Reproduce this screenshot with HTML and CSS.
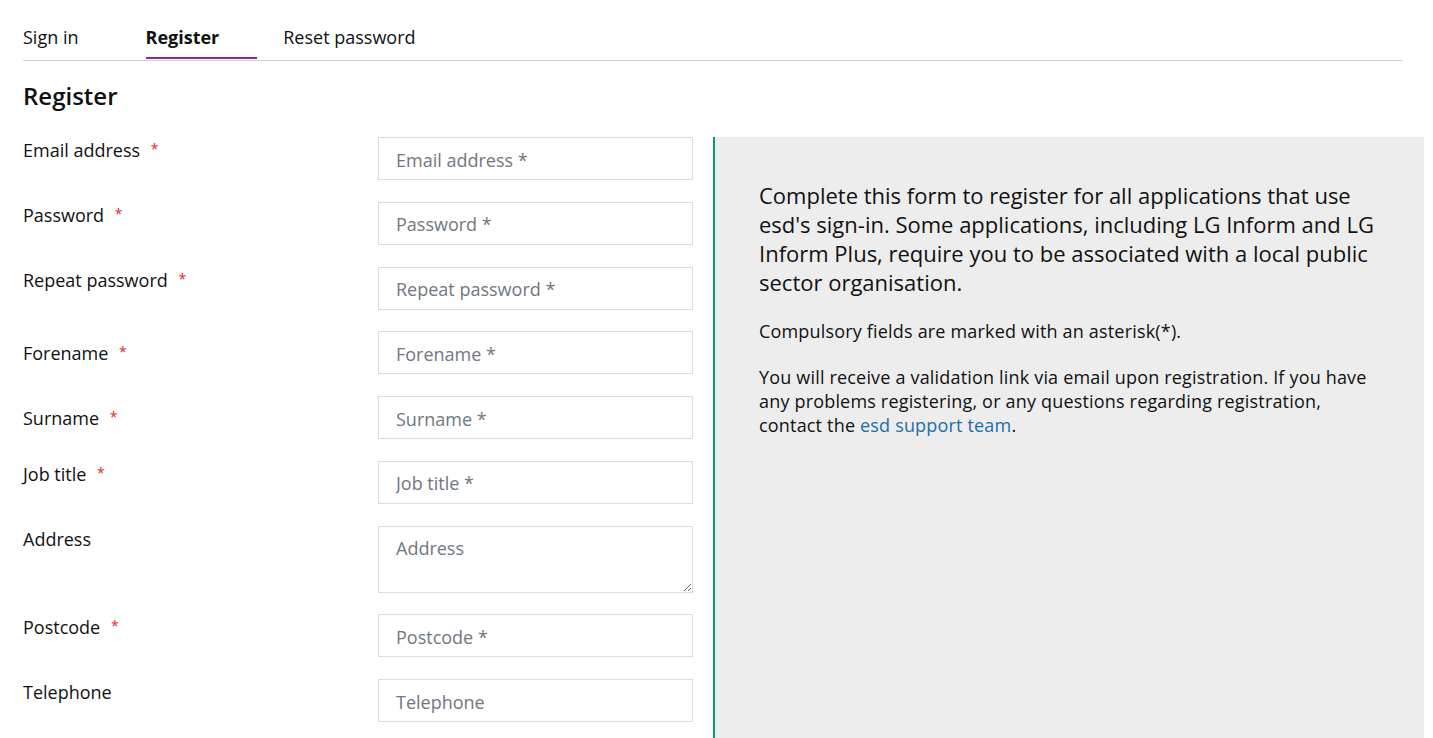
FILE: index.html
```html
<!DOCTYPE html>
<html lang="en">
<head>
<meta charset="utf-8">
<title>Register</title>
<link rel="stylesheet" href="styles.css">
</head>
<body>
<div class="page">
  <nav class="tabs">
    <a class="tab tab-first" href="#">Sign in</a>
    <a class="tab active" href="#">Register</a>
    <a class="tab" href="#">Reset password</a>
  </nav>
  <h1 class="title">Register</h1>
  <div class="content">
    <form class="form">
      <div class="row">
        <label class="label">Email address <span class="req">*</span></label>
        <input class="field" type="text" placeholder="Email address *">
      </div>
      <div class="row">
        <label class="label">Password <span class="req">*</span></label>
        <input class="field" type="password" placeholder="Password *">
      </div>
      <div class="row">
        <label class="label">Repeat password <span class="req">*</span></label>
        <input class="field" type="password" placeholder="Repeat password *">
      </div>
      <div class="row">
        <label class="label label-mid">Forename <span class="req">*</span></label>
        <input class="field" type="text" placeholder="Forename *">
      </div>
      <div class="row">
        <label class="label label-mid">Surname <span class="req">*</span></label>
        <input class="field" type="text" placeholder="Surname *">
      </div>
      <div class="row">
        <label class="label">Job title <span class="req">*</span></label>
        <input class="field" type="text" placeholder="Job title *">
      </div>
      <div class="row">
        <label class="label">Address</label>
        <textarea class="field area" placeholder="Address"></textarea>
      </div>
      <div class="row">
        <label class="label">Postcode <span class="req">*</span></label>
        <input class="field" type="text" placeholder="Postcode *">
      </div>
      <div class="row">
        <label class="label">Telephone</label>
        <input class="field" type="text" placeholder="Telephone">
      </div>
    </form>
    <aside class="info">
      <p class="lead">Complete this form to register for all applications that use esd's sign-in. Some applications, including LG Inform and LG Inform Plus, require you to be associated with a local public sector organisation.</p>
      <p class="note">Compulsory fields are marked with an asterisk(*).</p>
      <p class="note">You will receive a validation link via email upon registration. If you have any problems registering, or any questions regarding registration, contact the <a class="link" href="#">esd support team</a>.</p>
    </aside>
  </div>
</div>
</body>
</html>
```

FILE: styles.css
```css
html, body {
  margin: 0;
  padding: 0;
  background: #ffffff;
  overflow: hidden;
}

body {
  font-family: "Open Sans", "Noto Sans", "Liberation Sans", sans-serif;
  color: #111111;
  font-size: 18px;
  line-height: 24px;
}

.page {
  padding: 25px 9px 0 23px;
}

.tabs {
  display: flex;
  width: 1380px;
  border-bottom: 1px solid #d2d2d2;
  padding-bottom: 1px;
}

.tab {
  display: block;
  color: #111111;
  text-decoration: none;
  padding: 0 38px 8px 0;
  margin-right: 26px;
  border-bottom: 2px solid transparent;
}

.tab-first {
  padding-right: 41px;
}

.tab.active {
  font-weight: 700;
  border-bottom-color: #8e2a96;
}

.title {
  margin: 19px 0 25px;
  font-size: 24px;
  line-height: 32px;
  font-weight: 600;
}

.content {
  display: flex;
  gap: 20px;
  align-items: stretch;
}

.form {
  display: flex;
  flex-direction: column;
  gap: 21.75px;
  padding-bottom: 40px;
}

.row {
  display: flex;
  align-items: flex-start;
}

.label {
  width: 355px;
  padding-top: 1px;
}

.label-mid {
  padding-top: 10px;
}

.req {
  color: #e8262b;
  font-size: 14px;
  position: relative;
  top: -3px;
  margin-left: 6px;
}

.field {
  box-sizing: border-box;
  width: 315px;
  height: 43px;
  border: 1px solid #dcdcdc;
  border-radius: 0;
  padding: 2px 17px 0;
  font-family: inherit;
  font-size: 18px;
  color: #333333;
  background: #ffffff;
  margin: 0;
}

.field::placeholder {
  color: #6f7780;
}

.area {
  height: 67px;
  padding-top: 9px;
  line-height: 24px;
  resize: vertical;
  display: block;
}

.info {
  width: 711px;
  box-sizing: border-box;
  background: #ededed;
  border-left: 2px solid #00a07c;
  padding: 44px 44px 0 44px;
}

.info p {
  margin: 0;
}

.lead {
  font-size: 22px;
  line-height: 29px;
  margin-bottom: 22px !important;
}

.note {
  font-size: 18px;
  line-height: 24px;
  letter-spacing: 0.18px;
  margin-bottom: 22px !important;
}

.link {
  color: #1b6ea8;
  text-decoration: none;
}
```
